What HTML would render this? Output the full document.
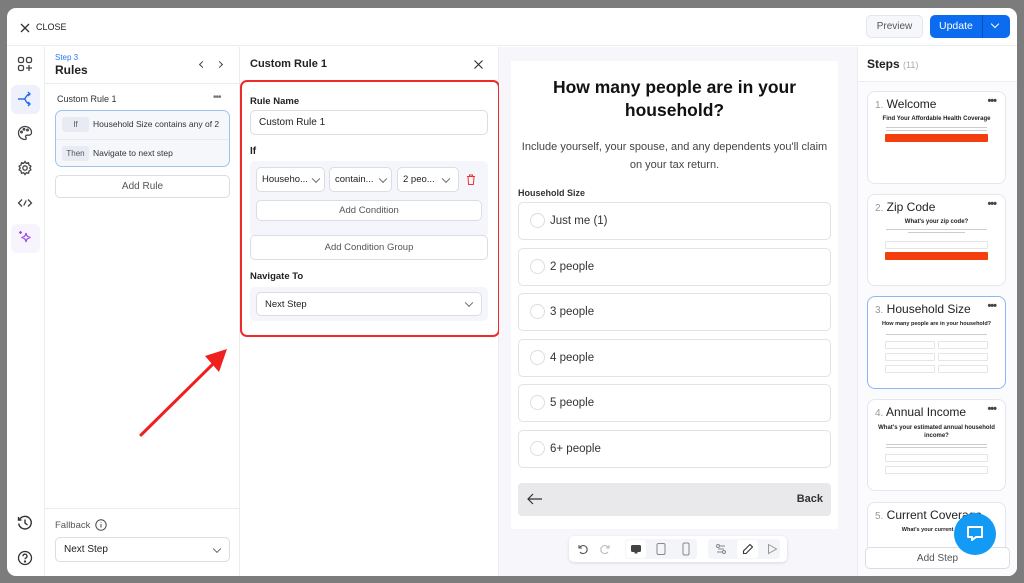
<!DOCTYPE html>
<html><head><meta charset="utf-8"><style>
*{box-sizing:border-box;margin:0;padding:0}
body{width:1024px;height:583px;background:#7c7c7c;font-family:"Liberation Sans",sans-serif;color:#222;position:relative;overflow:hidden}
.a{position:absolute}
.modal{left:7px;top:8px;width:1010px;height:568px;background:#fff;border-radius:9px;overflow:hidden}
.inp{position:absolute;border:1px solid #dcdde3;border-radius:5px;background:#fff;font-size:10px;color:#222;display:flex;align-items:center;padding-left:8px}
.btn{position:absolute;border:1px solid #dcdde3;border-radius:5px;background:#fff;font-size:10px;color:#555;display:flex;align-items:center;justify-content:center}
.chev{position:absolute;right:9px;top:50%;width:6px;height:6px;border-right:1px solid #666;border-bottom:1px solid #666;transform:translateY(-70%) rotate(45deg)}
.opt{position:absolute;left:7px;width:313px;height:38px;border:1px solid #e3e3e6;border-radius:5px;font-size:11.5px;color:#333;display:flex;align-items:center;padding-left:31px}
.opt:before{content:"";position:absolute;left:11px;top:50%;margin-top:-8px;width:15px;height:15px;border:1px solid #ddd;border-radius:50%;box-sizing:border-box}
.card{position:absolute;left:9px;width:139px;border:1px solid #e4e6ee;border-radius:8px;background:#fff;overflow:hidden}
.card .t{position:absolute;left:7px;top:5px;font-size:12px;color:#222}
.card .t span{color:#999;font-size:10px}
.card .d{position:absolute;right:9px;top:3px;font-size:11px;font-weight:bold;letter-spacing:-1px;color:#444}
.card .h{position:absolute;left:0;right:0;top:24px;text-align:center;font-size:6px;font-weight:bold;color:#222}
.card .l{position:absolute;left:18px;right:18px;height:1px;background:#ccc}
.card .r{position:absolute;left:17px;right:17px;height:8px;background:#f33f0d;border-radius:1px}
.card .b{position:absolute;height:8px;border:1px solid #e5e5e5;border-radius:1px}
.ic{position:absolute;left:10px;width:24px;height:24px;display:flex;align-items:center;justify-content:center}
</style></head><body>
<div class="a modal">
 <div class="a" style="left:0;top:0;width:1010px;height:38px;border-bottom:1px solid #ebecf0"></div>
 <svg class="a" style="left:13px;top:15px" width="10" height="10" viewBox="0 0 10 10"><path d="M1 1L9 9M9 1L1 9" stroke="#333" stroke-width="1.3"/></svg>
 <div class="a" style="left:29px;top:14px;font-size:9px;color:#222">CLOSE</div>
 <div class="a" style="left:859px;top:7px;width:57px;height:23px;border:1px solid #e4e6ee;border-radius:5px;background:#f6f7fb;font-size:10px;color:#555;display:flex;align-items:center;justify-content:center">Preview</div>
 <div class="a" style="left:923px;top:7px;width:80px;height:23px;background:#0b6cf0;border-radius:5px;color:#fff;font-size:10.5px"><span class="a" style="left:9px;top:5px">Update</span><span class="a" style="left:52px;top:0;width:1px;height:23px;background:#0650b8"></span><span class="a" style="left:62px;top:6px;width:6px;height:6px;border-right:1.5px solid #fff;border-bottom:1.5px solid #fff;transform:rotate(45deg)"></span></div>
 <div class="a" style="left:37px;top:39px;width:1px;height:529px;background:#ebecf0"></div>
 <div class="ic" style="left:6px;top:44px"><svg width="16" height="16" viewBox="0 0 16 16" fill="none" stroke="#444" stroke-width="1.3"><rect x="1.5" y="1.5" width="5" height="5" rx="1.5"/><rect x="9.5" y="1.5" width="5" height="5" rx="1.5"/><rect x="1.5" y="9.5" width="5" height="5" rx="1.5"/><path d="M12 9v6M9 12h6"/></svg></div>
 <div class="a" style="left:4px;top:77px;width:29px;height:29px;background:#eef0fb;border-radius:6px"></div>
 <div class="ic" style="left:6px;top:79px"><svg width="16" height="16" viewBox="0 0 16 16" fill="none" stroke="#2b6de8" stroke-width="1.4"><path d="M1 8h6M7 8c2 0 2-5 6-5M7 8c2 0 2 5 6 5M11 1l2 2-2 2M11 11l2 2-2 2"/></svg></div>
 <div class="ic" style="left:6px;top:113px"><svg width="16" height="16" viewBox="0 0 16 16" fill="none" stroke="#444" stroke-width="1.3"><path d="M8 1.5a6.5 6.5 0 1 0 0 13c1.5 0 1.5-1.5.8-2.3-.7-.8 0-2 1-2h2a2.7 2.7 0 0 0 2.7-2.7C14.5 4 11.6 1.5 8 1.5z"/><circle cx="4.5" cy="7" r=".8"/><circle cx="7" cy="4.3" r=".8"/><circle cx="10.5" cy="5" r=".8"/></svg></div>
 <div class="ic" style="left:6px;top:148px"><svg width="16" height="16" viewBox="0 0 16 16" fill="none" stroke="#444" stroke-width="1.3"><circle cx="8" cy="8" r="2.2"/><path d="M8 1.5l1.3 1.8 2.2-.5.5 2.2 1.9 1.2-1.1 1.8 1.1 1.8-1.9 1.2-.5 2.2-2.2-.5L8 14.5l-1.3-1.8-2.2.5-.5-2.2-1.9-1.2L3.2 8 2.1 6.2 4 5l.5-2.2 2.2.5z"/></svg></div>
 <div class="ic" style="left:6px;top:183px"><svg width="16" height="16" viewBox="0 0 16 16" fill="none" stroke="#444" stroke-width="1.3"><path d="M5 4.5L1.5 8 5 11.5M11 4.5L14.5 8 11 11.5M9.2 5.5l-2.4 5"/></svg></div>
 <div class="a" style="left:4px;top:216px;width:29px;height:29px;background:#f7f4fd;border-radius:6px"></div>
 <div class="ic" style="left:6px;top:218px"><svg width="16" height="16" viewBox="0 0 16 16" fill="none" stroke="#9b4de6" stroke-width="1.3"><path d="M9 3c.5 3 1.5 4 4.5 4.5-3 .5-4 1.5-4.5 4.5-.5-3-1.5-4-4.5-4.5C7.5 7 8.5 6 9 3z"/><path d="M3.5 1v3M2 2.5h3"/></svg></div>
 <div class="ic" style="left:6px;top:503px"><svg width="16" height="16" viewBox="0 0 16 16" fill="none" stroke="#333" stroke-width="1.4"><path d="M2.5 4.5A6.3 6.3 0 1 1 1.7 8.5"/><path d="M1.5 2v3h3M8 4.5V8l2.5 2"/></svg></div>
 <div class="ic" style="left:6px;top:538px"><svg width="16" height="16" viewBox="0 0 16 16" fill="none" stroke="#333" stroke-width="1.3"><circle cx="8" cy="8" r="6.5"/><path d="M6 6.2a2 2 0 1 1 2.8 1.8c-.6.3-.8.7-.8 1.3"/><circle cx="8" cy="11.5" r=".5" fill="#333"/></svg></div>
 <div class="a" style="left:232px;top:39px;width:1px;height:529px;background:#ebecf0"></div>
 <div class="a" style="left:38px;top:75px;width:194px;height:1px;background:#ebecf0"></div>
 <div class="a" style="left:48px;top:45px;font-size:8px;color:#2b7bf0">Step 3</div>
 <div class="a" style="left:48px;top:55px;font-size:12px;font-weight:bold;color:#222">Rules</div>
 <div class="a" style="left:193px;top:54px;width:5px;height:5px;border-left:1.3px solid #444;border-bottom:1.3px solid #444;transform:rotate(45deg)"></div>
 <div class="a" style="left:210px;top:54px;width:5px;height:5px;border-right:1.3px solid #444;border-top:1.3px solid #444;transform:rotate(45deg)"></div>
 <div class="a" style="left:50px;top:86px;font-size:9px;color:#333">Custom Rule 1</div>
 <div class="a" style="left:206px;top:84px;font-size:10px;color:#777;letter-spacing:-1px">•••</div>
 <div class="a" style="left:48px;top:102px;width:175px;height:57px;border:1px solid #9cc4f2;border-radius:7px;background:#f6f7fb">
  <div class="a" style="left:0;top:28px;width:173px;height:1px;background:#e8eaf0"></div>
  <div class="a" style="left:6px;top:6px;width:27px;height:15px;background:#e8eaf4;border-radius:3px;font-size:8px;color:#555;text-align:center;line-height:15px">If</div>
  <div class="a" style="left:37px;top:8px;font-size:8.5px;color:#333">Household Size contains any of 2</div>
  <div class="a" style="left:6px;top:35px;width:27px;height:15px;background:#e8eaf4;border-radius:3px;font-size:8px;color:#555;text-align:center;line-height:15px">Then</div>
  <div class="a" style="left:37px;top:37px;font-size:8.5px;color:#333">Navigate to next step</div>
 </div>
 <div class="btn" style="left:48px;top:167px;width:175px;height:23px">Add Rule</div>
 <div class="a" style="left:38px;top:500px;width:194px;height:1px;background:#ebecf0"></div>
 <div class="a" style="left:48px;top:512px;font-size:9.5px;color:#555">Fallback</div>
 <svg class="a" style="left:88px;top:511px" width="12" height="12" viewBox="0 0 12 12" fill="none" stroke="#444"><circle cx="6" cy="6" r="5.2"/><path d="M6 5v3.5M6 3.2v.5"/></svg>
 <div class="inp" style="left:48px;top:529px;width:175px;height:25px;font-size:10px">Next Step<span class="chev"></span></div>
 <svg class="a" style="left:120px;top:332px" width="110" height="100" viewBox="0 0 110 100"><path d="M14 95L88 22" stroke="#f0201e" stroke-width="3" stroke-linecap="round"/><path d="M100 9L78 16L92 32Z" fill="#f0201e"/></svg>
 <div class="a" style="left:491px;top:39px;width:1px;height:529px;background:#ebecf0"></div>
 <div class="a" style="left:243px;top:50px;font-size:11px;font-weight:bold;color:#222">Custom Rule 1</div>
 <svg class="a" style="left:467px;top:52px" width="9" height="9" viewBox="0 0 9 9"><path d="M.5.5l8 8M8.5.5l-8 8" stroke="#333" stroke-width="1.2"/></svg>
 <div class="a" style="left:233px;top:72px;width:260px;height:257px;border:2px solid #ee2a2a;border-radius:7px"></div>
 <div class="a" style="left:243px;top:88px;font-size:9.5px;font-weight:bold;color:#222">Rule Name</div>
 <div class="inp" style="left:243px;top:102px;width:238px;height:25px">Custom Rule 1</div>
 <div class="a" style="left:243px;top:138px;font-size:10px;font-weight:bold">If</div>
 <div class="a" style="left:243px;top:153px;width:238px;height:76px;background:#f5f6fb;border-radius:5px"></div>
 <div class="inp" style="left:249px;top:159px;width:69px;height:25px;font-size:9.5px;padding-left:5px">Househo...<span class="chev" style="right:5px"></span></div>
 <div class="inp" style="left:322px;top:159px;width:63px;height:25px;font-size:9.5px;padding-left:5px">contain...<span class="chev" style="right:5px"></span></div>
 <div class="inp" style="left:390px;top:159px;width:62px;height:25px;font-size:9.5px;padding-left:5px">2 peo...<span class="chev"></span></div>
 <svg class="a" style="left:459px;top:166px" width="10" height="11" viewBox="0 0 10 11" fill="none" stroke="#e33" stroke-width="1"><path d="M1 2.5h8M3.5 2.5V1h3v1.5M2 2.5l.6 8h4.8l.6-8"/></svg>
 <div class="btn" style="left:249px;top:192px;width:226px;height:21px;font-size:9.5px">Add Condition</div>
 <div class="btn" style="left:243px;top:227px;width:238px;height:25px;font-size:9.5px">Add Condition Group</div>
 <div class="a" style="left:243px;top:263px;font-size:9.5px;font-weight:bold">Navigate To</div>
 <div class="a" style="left:243px;top:279px;width:238px;height:34px;background:#f5f6fb;border-radius:5px"></div>
 <div class="inp" style="left:249px;top:284px;width:226px;height:24px;font-size:9.5px">Next Step<span class="chev"></span></div>
 <div class="a" style="left:492px;top:39px;width:358px;height:529px;background:#f6f6fb"></div>
 <div class="a" style="left:504px;top:53px;width:327px;height:468px;background:#fff">
  <div class="a" style="left:0;top:15px;width:327px;text-align:center;font-size:17.5px;font-weight:bold;line-height:23px;color:#111">How many people are in your<br>household?</div>
  <div class="a" style="left:0;top:77px;width:327px;text-align:center;font-size:11px;line-height:18px;color:#444">Include yourself, your spouse, and any dependents you'll claim<br>on your tax return.</div>
  <div class="a" style="left:7px;top:127px;font-size:9px;font-weight:bold;color:#333">Household Size</div>
  <div class="opt" style="top:141px">Just me (1)</div>
  <div class="opt" style="top:187px">2 people</div>
  <div class="opt" style="top:232px">3 people</div>
  <div class="opt" style="top:278px">4 people</div>
  <div class="opt" style="top:323px">5 people</div>
  <div class="opt" style="top:369px">6+ people</div>
  <div class="a" style="left:7px;top:422px;width:313px;height:33px;background:#e9e9ec;border-radius:4px">
   <svg class="a" style="left:9px;top:10px" width="16" height="12" viewBox="0 0 16 12" fill="none" stroke="#333" stroke-width="1.2"><path d="M15 6H1M6 1L1 6l5 5"/></svg>
   <div class="a" style="right:8px;top:10px;font-size:11px;font-weight:bold;color:#333">Back</div>
  </div>
 </div>
 <div class="a" style="left:562px;top:528px;width:218px;height:26px;background:#fff;border-radius:5px;box-shadow:0 1px 3px rgba(0,0,0,.12)">
  <svg class="a" style="left:8px;top:7px" width="12" height="12" viewBox="0 0 12 12" fill="none" stroke="#555" stroke-width="1.1"><path d="M2 2v3h3M2.5 5A4 4 0 1 1 3 9"/></svg>
  <svg class="a" style="left:30px;top:7px" width="12" height="12" viewBox="0 0 12 12" fill="none" stroke="#bbb" stroke-width="1.1"><path d="M10 2v3H7M9.5 5A4 4 0 1 0 9 9"/></svg>
  <div class="a" style="left:56px;top:3px;width:72px;height:20px;background:#f4f5f9;border-radius:3px"></div>
  <div class="a" style="left:57px;top:4px;width:20px;height:18px;background:#fff;border-radius:3px"></div>
  <svg class="a" style="left:61px;top:7px" width="12" height="12" viewBox="0 0 12 12"><rect x="1" y="2" width="10" height="7" rx="1.5" fill="#444"/><rect x="4.5" y="9" width="3" height="1.5" fill="#444"/></svg>
  <svg class="a" style="left:86px;top:6px" width="12" height="14" viewBox="0 0 12 14" fill="none" stroke="#888"><rect x="2" y="1.5" width="8" height="11" rx="1.5"/></svg>
  <svg class="a" style="left:111px;top:6px" width="12" height="14" viewBox="0 0 12 14" fill="none" stroke="#888"><rect x="3" y="1" width="6" height="12" rx="1.5"/></svg>
  <div class="a" style="left:139px;top:3px;width:72px;height:20px;background:#f4f5f9;border-radius:3px"></div>
  <svg class="a" style="left:146px;top:7px" width="12" height="12" viewBox="0 0 12 12" fill="none" stroke="#888"><circle cx="3" cy="3" r="1.5"/><circle cx="9" cy="9" r="1.5"/><path d="M5 3h5M2 9h5M3 6h6"/></svg>
  <div class="a" style="left:168px;top:4px;width:21px;height:18px;background:#fff;border-radius:3px"></div>
  <svg class="a" style="left:173px;top:7px" width="12" height="12" viewBox="0 0 12 12" fill="none" stroke="#333" stroke-width="1.1"><path d="M8 1.5l2.5 2.5L4 10.5H1.5V8z"/></svg>
  <svg class="a" style="left:197px;top:7px" width="12" height="12" viewBox="0 0 12 12" fill="none" stroke="#999"><path d="M2.5 1.5l8 4.5-8 4.5z"/></svg>
 </div>
 <div class="a" style="left:850px;top:39px;width:1px;height:529px;background:#ebecf0"></div>
 <div class="a" style="left:851px;top:73px;width:159px;height:1px;background:#ebecf0"></div>
 <div class="a" style="left:851px;top:74px;width:159px;height:494px;background:#fbfbfe"></div>
 <div class="a" style="left:860px;top:49px;font-size:12px;font-weight:bold;color:#222">Steps <span style="font-weight:normal;font-size:9px;color:#aaa">(11)</span></div>
 <div class="a" style="left:851px;top:74px;width:159px;height:466px;overflow:hidden">
  <div class="card" style="top:9px;height:93px"><div class="t"><span>1.</span> Welcome</div><div class="d">•••</div><div class="h">Find Your Affordable Health Coverage</div><div class="l" style="top:35px"></div><div class="l" style="top:38px"></div><div class="r" style="top:42px"></div></div>
  <div class="card" style="top:112px;height:92px"><div class="t"><span>2.</span> Zip Code</div><div class="d">•••</div><div class="h">What's your zip code?</div><div class="l" style="top:34px"></div><div class="l" style="top:37px;left:40px;right:40px"></div><div class="b" style="top:46px;left:17px;right:17px"></div><div class="r" style="top:57px"></div></div>
  <div class="card" style="top:214px;height:93px;border-color:#8ab8f0;background:#fff"><div class="t"><span>3.</span> Household Size</div><div class="d">•••</div><div class="h" style="font-size:5.5px">How many people are in your household?</div><div class="l" style="top:37px"></div><div class="b" style="top:44px;left:17px;width:50px"></div><div class="b" style="top:44px;left:70px;width:50px"></div><div class="b" style="top:56px;left:17px;width:50px"></div><div class="b" style="top:56px;left:70px;width:50px"></div><div class="b" style="top:68px;left:17px;width:50px"></div><div class="b" style="top:68px;left:70px;width:50px"></div></div>
  <div class="card" style="top:317px;height:92px"><div class="t"><span>4.</span> Annual Income</div><div class="d">•••</div><div class="h" style="line-height:8px">What's your estimated annual household<br>income?</div><div class="l" style="top:44px"></div><div class="l" style="top:47px"></div><div class="b" style="top:54px;left:17px;right:17px"></div><div class="b" style="top:66px;left:17px;right:17px"></div></div>
  <div class="card" style="top:420px;height:60px"><div class="t"><span>5.</span> Current Coverage</div><div class="h" style="font-size:5.5px">What's your current health</div></div>
 </div>
 <div class="btn" style="left:858px;top:539px;width:145px;height:22px;font-size:10px">Add Step</div>
 <div class="a" style="left:947px;top:505px;width:42px;height:42px;background:#139af5;border-radius:50%"></div>
 <svg class="a" style="left:957px;top:515px" width="22" height="22" viewBox="0 0 22 22" fill="none" stroke="#fff" stroke-width="2"><path d="M4 4h14v10h-6l-4 3v-3H4z" stroke-linejoin="round"/></svg>
</div>
</body></html>
